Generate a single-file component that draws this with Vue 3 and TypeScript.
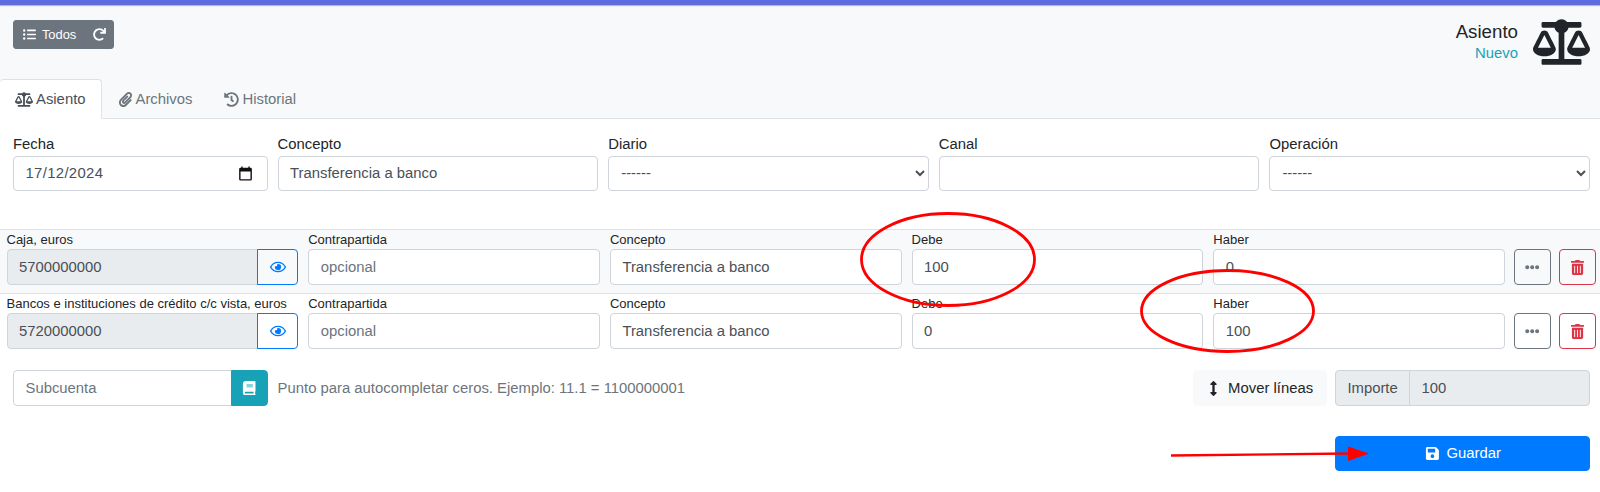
<script setup lang="ts">
const icons = {
  scale: { box: '0 0 640 512', d: 'M256 336h-.02c0-16.18 1.34-8.73-85.05-181.51-17.65-35.29-68.19-35.36-85.87 0C-2.06 328.75.02 320.33.02 336H0c0 44.18 57.31 80 128 80s128-35.82 128-80zM128 176l72 144H56l72-144zm511.98 160c0-16.18 1.34-8.73-85.05-181.51-17.65-35.29-68.19-35.36-85.87 0-87.12 174.26-85.04 165.84-85.04 181.51H384c0 44.18 57.31 80 128 80s128-35.82 128-80h-.02zM440 320l72-144 72 144H440zm88 128H352V153.25c23.51-10.29 41.16-31.48 46.39-57.25H528c8.84 0 16-7.16 16-16V48c0-8.84-7.16-16-16-16H383.64C369.04 12.68 346.09 0 320 0s-49.04 12.68-63.64 32H112c-8.84 0-16 7.16-16 16v32c0 8.84 7.16 16 16 16h129.61c5.23 25.76 22.87 46.96 46.39 57.25V448H112c-8.84 0-16 7.16-16 16v32c0 8.84 7.16 16 16 16h416c8.84 0 16-7.16 16-16v-32c0-8.84-7.16-16-16-16z' },
  list: { box: '0 0 512 512', d: 'M48 48a48 48 0 1 0 48 48 48 48 0 0 0-48-48zm0 160a48 48 0 1 0 48 48 48 48 0 0 0-48-48zm0 160a48 48 0 1 0 48 48 48 48 0 0 0-48-48zm448 16H176a16 16 0 0 0-16 16v32a16 16 0 0 0 16 16h320a16 16 0 0 0 16-16v-32a16 16 0 0 0-16-16zm0-320H176a16 16 0 0 0-16 16v32a16 16 0 0 0 16 16h320a16 16 0 0 0 16-16V80a16 16 0 0 0-16-16zm0 160H176a16 16 0 0 0-16 16v32a16 16 0 0 0 16 16h320a16 16 0 0 0 16-16v-32a16 16 0 0 0-16-16z' },
  redo: { box: '0 0 512 512', d: 'M500.33 0h-47.41a12 12 0 0 0-12 12.57l4 82.76A247.42 247.42 0 0 0 256 8C119.34 8 7.9 119.53 8 256.19 8.1 393.07 119.1 504 256 504a247.1 247.1 0 0 0 166.18-63.91 12 12 0 0 0 .48-17.43l-34-34a12 12 0 0 0-16.38-.55A176 176 0 1 1 402.1 157.8l-101.53-4.87a12 12 0 0 0-12.57 12v47.41a12 12 0 0 0 12 12h200.33a12 12 0 0 0 12-12V12a12 12 0 0 0-12-12z' },
  paperclip: { box: '0 0 448 512', d: 'M43.246 466.142c-58.43-60.289-57.341-157.511 1.386-217.581L254.392 34c44.316-45.332 116.351-45.336 160.671 0 43.89 44.894 43.943 117.329 0 162.276L232.214 383.128c-29.855 30.537-78.633 30.111-107.982-.998-28.275-29.97-27.368-77.473 1.452-106.953l143.743-146.835c6.182-6.314 16.312-6.422 22.626-.241l22.861 22.379c6.315 6.182 6.422 16.312.241 22.626L171.427 319.927c-4.932 5.045-5.236 13.428-.648 18.292 4.372 4.634 11.245 4.711 15.688.165l182.849-186.851c19.613-20.062 19.613-52.725-.011-72.798-19.189-19.627-49.957-19.637-69.154 0L90.39 293.295c-34.763 35.56-35.299 93.12-1.191 128.313 34.01 35.093 88.985 35.137 123.058.286l172.06-175.999c6.177-6.319 16.307-6.433 22.626-.256l22.877 22.364c6.319 6.177 6.434 16.307.256 22.626l-172.06 175.998c-59.576 60.938-155.943 60.216-214.77-.485z' },
  history: { box: '0 0 512 512', d: 'M504 255.531c.253 136.64-111.18 248.372-247.82 248.468-59.015.042-113.223-20.53-155.822-54.911-11.077-8.94-11.905-25.541-1.839-35.607l11.267-11.267c8.609-8.609 22.353-9.551 31.891-1.984C173.062 425.135 212.781 440 256 440c101.705 0 184-82.311 184-184 0-101.705-82.311-184-184-184-48.814 0-93.149 18.969-126.068 49.932l50.754 50.754c10.08 10.08 2.941 27.314-11.313 27.314H24c-8.837 0-16-7.163-16-16V38.627c0-14.254 17.234-21.393 27.314-11.314l49.372 49.372C129.209 34.136 189.552 8 256 8c136.81 0 247.747 110.78 248 247.531zm-180.912 78.784l9.823-12.63c8.138-10.463 6.253-25.542-4.21-33.679L288 256.349V152c0-13.255-10.745-24-24-24h-16c-13.255 0-24 10.745-24 24v135.651l65.409 50.874c10.463 8.137 25.541 6.253 33.679-4.21z' },
  eye: { box: '0 0 576 512', d: 'M288 144a110.94 110.94 0 0 0-31.24 5 55.4 55.4 0 0 1 7.24 27 56 56 0 0 1-56 56 55.4 55.4 0 0 1-27-7.24A111.71 111.71 0 1 0 288 144zm284.52 97.4C518.29 135.59 410.93 64 288 64S57.68 135.64 3.48 241.41a32.35 32.35 0 0 0 0 29.19C57.71 376.41 165.07 448 288 448s230.32-71.64 284.52-177.41a32.35 32.35 0 0 0 0-29.19zM288 400c-98.65 0-189.09-55-237.93-144C98.91 167 189.34 112 288 112s189.09 55 237.93 144C477.1 345 386.66 400 288 400z' },
  dots: { box: '0 0 512 512', d: 'M328 256c0 39.8-32.2 72-72 72s-72-32.2-72-72 32.2-72 72-72 72 32.2 72 72zm104-72c-39.8 0-72 32.2-72 72s32.2 72 72 72 72-32.2 72-72-32.2-72-72-72zm-352 0c-39.8 0-72 32.2-72 72s32.2 72 72 72 72-32.2 72-72-32.2-72-72-72z' },
  trash: { box: '0 0 448 512', d: 'M32 464a48 48 0 0 0 48 48h288a48 48 0 0 0 48-48V128H32zm272-256a16 16 0 0 1 32 0v224a16 16 0 0 1-32 0zm-96 0a16 16 0 0 1 32 0v224a16 16 0 0 1-32 0zm-96 0a16 16 0 0 1 32 0v224a16 16 0 0 1-32 0zM432 32H312l-9-19a24 24 0 0 0-21.5-13h-114.3a23.72 23.72 0 0 0-21.4 13l-9 19H16A16 16 0 0 0 0 48v32a16 16 0 0 0 16 16h416a16 16 0 0 0 16-16V48a16 16 0 0 0-16-16z' },
  book: { box: '0 0 448 512', d: 'M448 360V24c0-13.3-10.7-24-24-24H96C43 0 0 43 0 96v320c0 53 43 96 96 96h328c13.3 0 24-10.7 24-24v-16c0-7.5-3.5-14.3-8.9-18.7-4.2-15.4-4.2-59.3 0-74.7 5.4-4.3 8.9-11.1 8.9-18.6zM128 134c0-3.3 2.7-6 6-6h212c3.3 0 6 2.7 6 6v20c0 3.3-2.7 6-6 6H134c-3.3 0-6-2.7-6-6v-20zm0 64c0-3.3 2.7-6 6-6h212c3.3 0 6 2.7 6 6v20c0 3.3-2.7 6-6 6H134c-3.3 0-6-2.7-6-6v-20zm253.4 250H96c-17.7 0-32-14.3-32-32 0-17.6 14.4-32 32-32h285.4c-1.9 17.1-1.9 46.9 0 64z' },
  arrows: { box: '0 0 256 512', d: 'M214.059 377.941H168V134.059h46.059c21.382 0 32.09-25.851 16.971-40.971L144.971 7.029c-9.373-9.373-24.569-9.373-33.941 0L24.971 93.088c-15.119 15.119-4.411 40.971 16.971 40.971H88v243.882H41.941c-21.382 0-32.09 25.851-16.971 40.971l86.059 86.059c9.373 9.373 24.569 9.373 33.941 0l86.059-86.059c15.119-15.119 4.411-40.971-16.97-40.971z' },
  save: { box: '0 0 448 512', d: 'M433.941 129.941l-83.882-83.882A48 48 0 0 0 316.118 32H48C21.49 32 0 53.49 0 80v352c0 26.51 21.49 48 48 48h352c26.51 0 48-21.49 48-48V163.882a48 48 0 0 0-14.059-33.941zM224 416c-35.346 0-64-28.654-64-64 0-35.346 28.654-64 64-64s64 28.654 64 64c0 35.346-28.654 64-64 64zm96-304.52V212c0 6.627-5.373 12-12 12H76c-6.627 0-12-5.373-12-12V108c0-6.627 5.373-12 12-12h228.52c3.183 0 6.235 1.264 8.485 3.515l3.48 3.48A11.996 11.996 0 0 1 320 111.48z' },
}

const tabs = [
  { label: 'Asiento', icon: icons.scale, active: true },
  { label: 'Archivos', icon: icons.paperclip, active: false },
  { label: 'Historial', icon: icons.history, active: false },
]

const lines = [
  { name: 'Caja, euros', account: '5700000000', debe: '100', haber: '0' },
  { name: 'Bancos e instituciones de crédito c/c vista, euros', account: '5720000000', debe: '0', haber: '100' },
]
</script>

<template>
  <div class="page">
    <div class="topbar" />

    <div class="head">
      <div class="head-row">
        <div class="btn-group">
          <button class="btn-todos">
            <svg class="ico" :viewBox="icons.list.box"><path :d="icons.list.d" /></svg>
            <span>Todos</span>
          </button>
          <button class="btn-reload">
            <svg class="ico" :viewBox="icons.redo.box"><path :d="icons.redo.d" /></svg>
          </button>
        </div>
        <div class="title">
          <div class="title-text">
            <div class="title-main">Asiento</div>
            <div class="title-sub">Nuevo</div>
          </div>
          <svg class="title-icon" :viewBox="icons.scale.box"><path :d="icons.scale.d" /></svg>
        </div>
      </div>
      <div class="tabs">
        <a v-for="tab in tabs" :key="tab.label" class="tab" :class="{ active: tab.active }">
          <svg class="ico" :viewBox="tab.icon.box"><path :d="tab.icon.d" /></svg>
          {{ tab.label }}
        </a>
      </div>
    </div>

    <div class="form-row">
      <div class="field field-small">
        <label>Fecha</label>
        <div class="control date">
          <span>17/12/2024</span>
          <svg class="cal" viewBox="0 0 24 24"><path d="M19 4h-1V2h-2v2H8V2H6v2H5a2 2 0 0 0-2 2v14a2 2 0 0 0 2 2h14a2 2 0 0 0 2-2V6a2 2 0 0 0-2-2zm0 16H5V9h14z" /></svg>
        </div>
      </div>
      <div class="field">
        <label>Concepto</label>
        <input class="control" value="Transferencia a banco">
      </div>
      <div class="field">
        <label>Diario</label>
        <select class="control"><option>------</option></select>
      </div>
      <div class="field">
        <label>Canal</label>
        <input class="control">
      </div>
      <div class="field">
        <label>Operación</label>
        <select class="control"><option>------</option></select>
      </div>
    </div>

    <div class="lines">
      <div v-for="line in lines" :key="line.account" class="line">
        <div class="cell">
          <label>{{ line.name }}</label>
          <div class="group">
            <input class="control readonly joined" :value="line.account" readonly>
            <button class="btn-eye">
              <svg class="ico" :viewBox="icons.eye.box"><path :d="icons.eye.d" /></svg>
            </button>
          </div>
        </div>
        <div class="cell">
          <label>Contrapartida</label>
          <input class="control" placeholder="opcional">
        </div>
        <div class="cell">
          <label>Concepto</label>
          <input class="control" value="Transferencia a banco">
        </div>
        <div class="cell">
          <label>Debe</label>
          <input class="control" :value="line.debe">
        </div>
        <div class="cell">
          <label>Haber</label>
          <input class="control" :value="line.haber">
        </div>
        <div class="action">
          <button class="btn-more">
            <svg class="ico" :viewBox="icons.dots.box"><path :d="icons.dots.d" /></svg>
          </button>
        </div>
        <div class="action">
          <button class="btn-delete">
            <svg class="ico" :viewBox="icons.trash.box"><path :d="icons.trash.d" /></svg>
          </button>
        </div>
      </div>
    </div>

    <div class="tools">
      <div class="tools-side">
        <div class="group">
          <input class="control joined" placeholder="Subcuenta">
          <button class="btn-book">
            <svg class="ico" :viewBox="icons.book.box"><path :d="icons.book.d" /></svg>
          </button>
        </div>
      </div>
      <div class="hint">Punto para autocompletar ceros. Ejemplo: 11.1 = 1100000001</div>
      <button class="btn-move">
        <svg class="ico" :viewBox="icons.arrows.box"><path :d="icons.arrows.d" /></svg>
        Mover líneas
      </button>
      <div class="tools-side">
        <div class="group total">
          <span class="addon">Importe</span>
          <span class="total-value">100</span>
        </div>
      </div>
    </div>

    <div class="save-row">
      <div class="tools-side">
        <button class="btn-save">
          <svg class="ico" :viewBox="icons.save.box"><path :d="icons.save.d" /></svg>
          Guardar
        </button>
      </div>
    </div>

    <svg class="marks" viewBox="0 0 1600 492">
      <ellipse cx="948" cy="259.5" rx="86.5" ry="46" />
      <ellipse cx="1227.5" cy="311" rx="86" ry="40.5" />
      <path class="arrow-line" d="M1171 455.5 L1350 453.5" />
      <path class="arrow-head" d="M1348 446.5 L1369 453.5 L1348 461 Z" />
    </svg>
  </div>
</template>

<style>
html, body {
  margin: 0;
  background: #fff;
}
</style>

<style scoped>
.page {
  position: relative;
  height: 492px;
  overflow: hidden;
  font-family: "Liberation Sans", Arial, sans-serif;
  font-size: 14.85px;
  line-height: 1.5;
  color: #212529;
}

.ico {
  width: 1em;
  height: 1em;
  fill: currentColor;
  flex: none;
}

.topbar {
  height: 5px;
  background: #5c6ddd;
  box-shadow: 0 1px 1px rgba(0, 0, 0, 0.25);
  position: relative;
}

.head {
  background: #f8f9fa;
  border-bottom: 1px solid #dee2e6;
  height: 114px;
  box-sizing: border-box;
  display: flex;
  flex-direction: column;
  justify-content: space-between;
}

.head-row {
  display: flex;
  justify-content: space-between;
  padding: 15px 10px 0 13px;
}

.btn-group {
  display: flex;
  height: 29px;
  background: #6c757d;
  border-radius: 3px;
  border: 1px solid #6c757d;
  box-sizing: border-box;
  color: #fff;
  font-size: 12.9px;
}

.btn-group button {
  background: none;
  border: 0;
  color: inherit;
  font: inherit;
  display: flex;
  align-items: center;
  padding: 0;
}

.btn-todos {
  gap: 6px;
  width: 72px;
  padding-left: 9px !important;
}

.btn-reload {
  width: 27px;
  justify-content: center;
}

.title {
  display: flex;
  gap: 15px;
  text-align: right;
}

.title-main {
  font-size: 18.7px;
  line-height: 24px;
}

.title-sub {
  color: #17a2b8;
  line-height: 20px;
  margin-top: -1px;
}

.title-icon {
  width: 57px;
  height: 46px;
  fill: #212529;
  margin-top: -1px;
}

.tabs {
  display: flex;
  margin-bottom: -1px;
}

.tab {
  display: flex;
  align-items: center;
  gap: 3px;
  height: 40px;
  box-sizing: border-box;
  padding: 0 15px;
  color: #6c757d;
  border: 1px solid transparent;
  border-radius: 4px 4px 0 0;
}

.tab:first-child {
  padding: 0 15px;
  border-left: 0;
}

.tab.active {
  background: #fff;
  color: #495057;
  border-color: #dee2e6 #dee2e6 #fff;
}

.tab .ico {
  width: 18px;
  height: 15px;
}

.tab:not(:first-child) .ico {
  width: 15px;
}

.form-row {
  display: flex;
  padding: 14px 5px 0 8px;
}

.field {
  flex: 1 1 0;
  padding: 0 5px;
  min-width: 0;
}

.field-small {
  flex: none;
  width: 264.6px;
  box-sizing: border-box;
}

.field label {
  display: block;
  margin-bottom: 0.4px;
}

.control {
  display: block;
  width: 100%;
  height: 35.6px;
  box-sizing: border-box;
  padding: 6px 11.5px;
  font: inherit;
  color: #495057;
  background: #fff;
  border: 1px solid #ced4da;
  border-radius: 4px;
  outline: none;
}

select.control {
  padding-left: 8px;
}

.control::placeholder {
  color: #6c757d;
}

.date {
  display: flex;
  align-items: center;
  justify-content: space-between;
  padding-right: 13px;
  letter-spacing: 0.35px;
}

.cal {
  width: 17px;
  height: 17px;
  fill: #111;
}

.lines {
  margin-top: 37.6px;
}

.line {
  display: flex;
  padding: 0 0 8px 1.5px;
  border-top: 1px solid #dee2e6;
}

.line:first-child {
  background: #f8f9fa;
}

.cell {
  flex: 1 1 0;
  min-width: 0;
  padding: 0 5px;
}

.cell label {
  display: block;
  font-size: 13px;
  line-height: 19.4px;
  white-space: nowrap;
}

.group {
  display: flex;
}

.joined {
  flex: 1 1 0;
  min-width: 0;
  border-radius: 4px 0 0 4px;
}

.readonly {
  background: #e9ecef;
}

.action {
  flex: none;
  width: 37px;
  padding: 19.4px 4px 0;
}

.line button {
  height: 35.6px;
  padding: 0;
  background: transparent;
  border-radius: 4px;
  display: flex;
  align-items: center;
  justify-content: center;
  box-sizing: border-box;
}

.action button {
  width: 37px;
  font-size: 14.4px;
}

.btn-eye {
  width: 41px;
  flex: none;
  margin-left: -1px;
  border: 1px solid #007bff;
  color: #007bff;
  font-size: 16px;
  border-radius: 0 4px 4px 0 !important;
}

.btn-more {
  border: 1px solid #6c757d;
  color: #6c757d;
}

.btn-delete {
  border: 1px solid #dc3545;
  color: #dc3545;
}

.btn-delete .ico {
  font-size: 15px;
}

.tools {
  display: flex;
  align-items: center;
  margin-top: 13.4px;
  padding: 0 5px 0 8px;
}

.tools-side {
  width: 264.6px;
  box-sizing: border-box;
  padding: 0 5px;
  flex: none;
}

.hint {
  flex: 1;
  padding: 0 5px;
  color: #6c757d;
}

.btn-book {
  width: 37px;
  height: 35.6px;
  flex: none;
  margin-left: -1px;
  padding: 0;
  background: #17a2b8;
  border: 1px solid #17a2b8;
  border-radius: 0 4px 4px 0;
  color: #fff;
  font-size: 14.4px;
  display: flex;
  align-items: center;
  justify-content: center;
}

.btn-move {
  display: flex;
  align-items: center;
  gap: 10px;
  height: 35.6px;
  width: 134px;
  margin-right: 3.8px;
  padding: 0 0 0 15.5px;
  box-sizing: border-box;
  background: #f8f9fa;
  border: 1px solid #f8f9fa;
  border-radius: 4px;
  color: #212529;
  font: inherit;
}

.btn-move .ico {
  width: 9px;
  height: 15px;
}

.total {
  height: 35.6px;
  box-sizing: border-box;
  align-items: center;
  background: #e9ecef;
  border: 1px solid #ced4da;
  border-radius: 4px;
  color: #495057;
}

.addon {
  width: 74px;
  height: 100%;
  box-sizing: border-box;
  border-right: 1px solid #ced4da;
  padding: 6px 11px;
}

.total-value {
  padding: 0 11px;
}

.save-row {
  display: flex;
  justify-content: flex-end;
  margin-top: 30px;
  padding: 0 5px 0 8px;
}

.btn-save {
  width: 100%;
  height: 35.6px;
  display: flex;
  align-items: center;
  justify-content: center;
  gap: 7px;
  background: #007bff;
  border: 1px solid #007bff;
  border-radius: 4px;
  color: #fff;
  font: inherit;
}

.marks {
  position: absolute;
  inset: 0;
  width: 1600px;
  height: 492px;
  pointer-events: none;
}

.marks ellipse {
  fill: none;
  stroke: #f00;
  stroke-width: 2.8;
}

.arrow-line {
  fill: none;
  stroke: #f00;
  stroke-width: 2.4;
}

.arrow-head {
  fill: #f00;
}
</style>
